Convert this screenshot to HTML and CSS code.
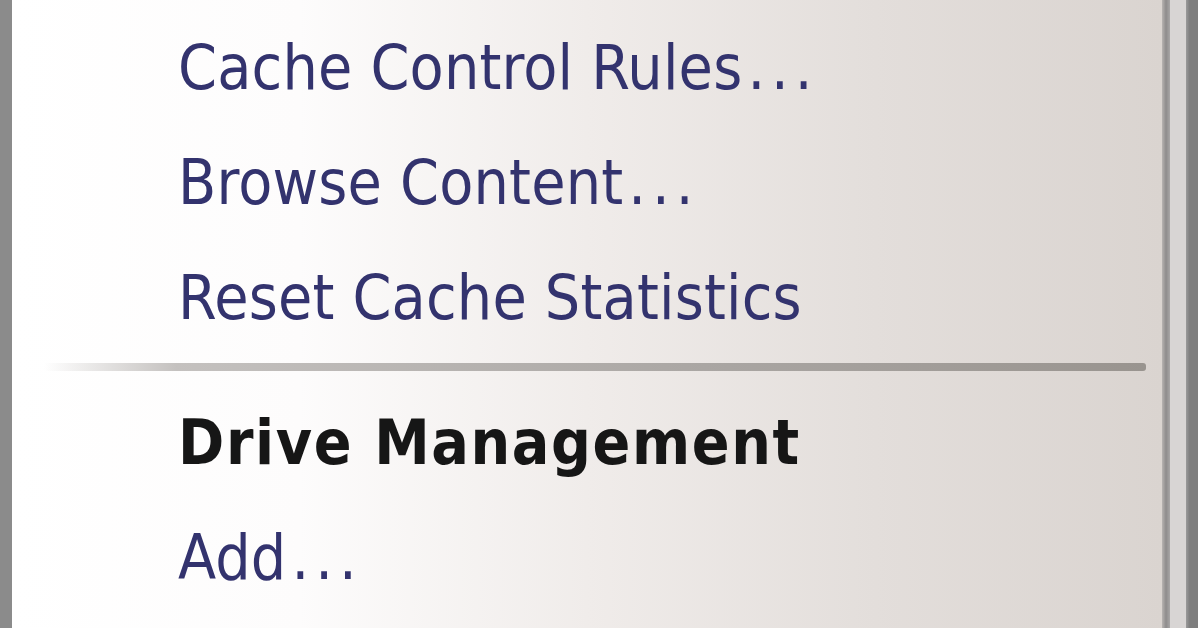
FILE: index.html
```html
<!DOCTYPE html>
<html>
<head>
<meta charset="utf-8">
<link rel="stylesheet" href="styles.css">
</head>
<body>
<div class="frame">
  <div class="edge-left"></div>
  <div class="pane">
    <div class="group">
      <a class="item">Cache Control Rules<span class="dots">...</span></a>
      <a class="item">Browse Content<span class="dots">...</span></a>
      <a class="item">Reset Cache Statistics</a>
    </div>
    <div class="separator"></div>
    <div class="group second">
      <div class="heading">Drive Management</div>
      <a class="item">Add<span class="dots">...</span></a>
    </div>
  </div>
  <div class="edge-rule"></div>
  <div class="edge-strip"></div>
  <div class="edge-right"></div>
</div>
</body>
</html>
```
FILE: styles.css
```css
html, body {
  margin: 0;
  padding: 0;
  width: 1198px;
  height: 628px;
  overflow: hidden;
  background: #dbd6d2;
}
.frame {
  display: flex;
  width: 1198px;
  height: 628px;
}
.edge-left {
  width: 12px;
  background: #8b8b8b;
  flex: none;
}
.pane {
  flex: 1;
  background: linear-gradient(to right, #ffffff 0%, #fdfcfc 25%, #f0ecea 50%, #e3dedb 75%, #dad4d0 100%);
  padding-left: 166px;
  font-family: "DejaVu Sans Condensed", "DejaVu Sans", sans-serif;
  font-size: 62px;
}
.group {
  display: flex;
  flex-direction: column;
}
.group:first-child {
  padding-top: 28px;
}
.item {
  color: #33336e;
  height: 115px;
  line-height: 80px;
  display: block;
  letter-spacing: 0.2px;
}
.dots {
  padding-left: 5px;
  letter-spacing: 6px;
}
.heading {
  color: #161616;
  font-weight: bold;
  height: 115px;
  line-height: 80px;
  letter-spacing: 1.6px;
}
.separator {
  height: 8px;
  margin: -10px 16px 32px -134px;
  background: linear-gradient(to right, rgba(170,166,162,0) 0%, #c4c1bf 12%, #aaa6a3 60%, #99948f 100%);
  border-radius: 3px;
}
.edge-rule {
  width: 8px;
  flex: none;
  background: linear-gradient(to right, #b8b4b2, #8e8c8c 50%, #a8a6a6);
}
.edge-strip {
  width: 16px;
  flex: none;
  background: #d8d5d4;
}
.edge-right {
  width: 12px;
  flex: none;
  background: linear-gradient(to right, #9a9a9a, #7e7e7e 30%);
}
```
